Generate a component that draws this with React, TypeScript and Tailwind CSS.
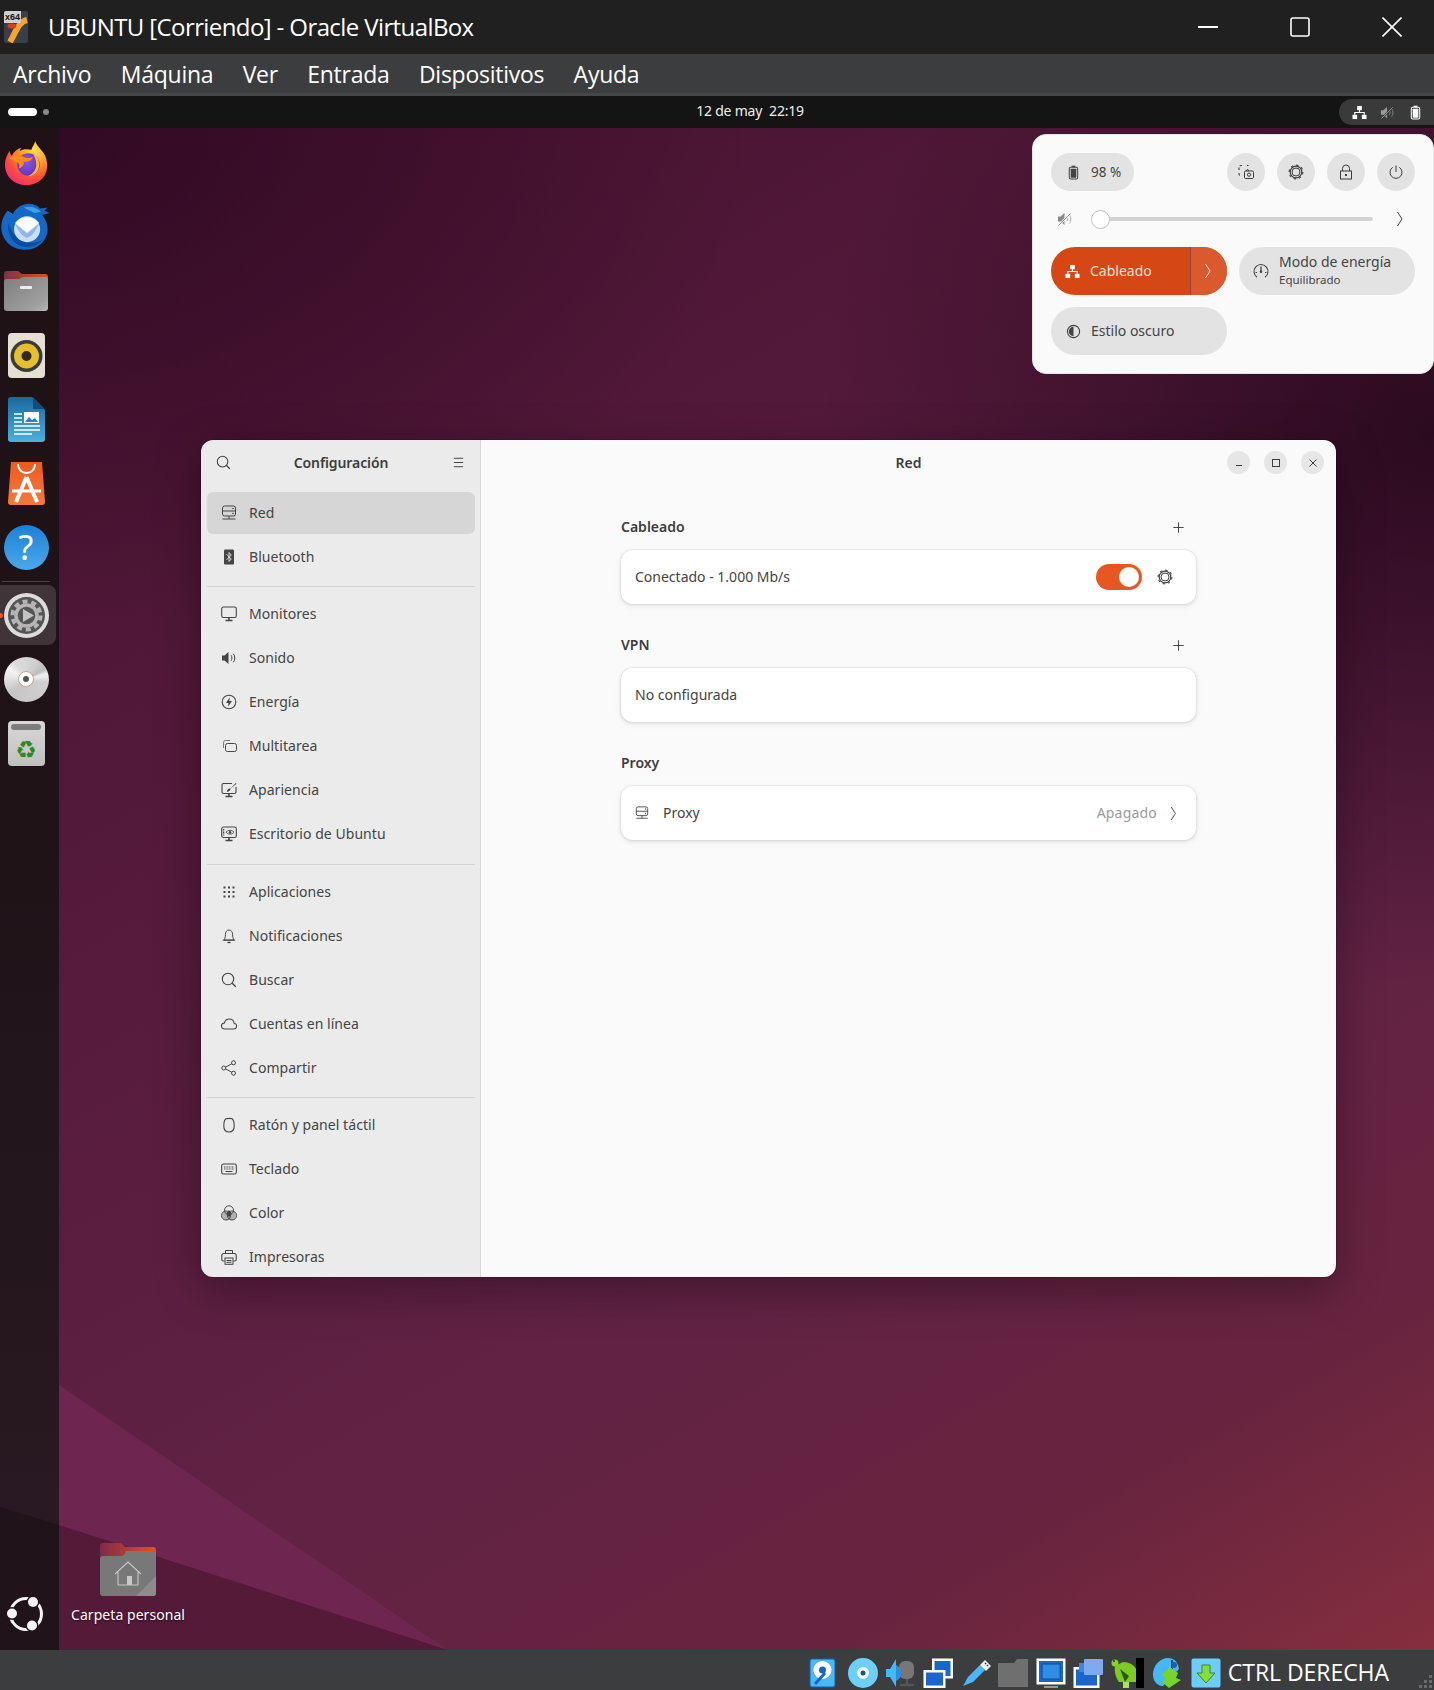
import React from "react";

type P = { className?: string };
const base = "w-4 h-4 shrink-0";
const S = ({ className, children }: P & { children: React.ReactNode }) => (
  <svg viewBox="0 0 16 16" fill="none" stroke="currentColor" strokeWidth={1} className={className ?? base}>
    {children}
  </svg>
);

const NetServer = (p: P) => (
  <S {...p}>
    <rect x="1.5" y="1" width="13" height="10" rx="2" />
    <path d="M1.5 6h13M1.5 14h13M8 11v3" />
    <circle cx="12" cy="3.5" r=".8" fill="currentColor" stroke="none" />
    <circle cx="12" cy="8.5" r=".8" fill="currentColor" stroke="none" />
  </S>
);
const Bluetooth = (p: P) => (
  <S {...p}>
    <rect x="3" y="0.5" width="10" height="15" rx="1.2" fill="currentColor" stroke="none" />
    <path d="M5.5 5.2 10.3 10 8 12.5V3.5L10.3 6 5.5 10.8" stroke="#ebebeb" strokeWidth=".9" />
  </S>
);
const Monitor = (p: P) => (
  <S {...p}>
    <rect x="0.7" y="1" width="14.6" height="10.5" rx="1.8" strokeWidth="1.1" />
    <path d="M8 11.5v2.5M4.5 14.5h7" strokeWidth="1.6" />
  </S>
);
const Sound = (p: P) => (
  <S {...p}>
    <path d="M1 5.5h2.5L7.5 2v12L3.5 10.5H1z" fill="currentColor" stroke="none" />
    <path d="M10 5.2c1.2 1.6 1.2 4 0 5.6M12.3 3.7c2 2.4 2 6.2 0 8.6" />
  </S>
);
const Power = (p: P) => (
  <S {...p}>
    <circle cx="8" cy="8" r="6.8" strokeWidth="1.1" />
    <path d="M8.8 3.2 5 9h2.5l-.5 3.8L11 7H8.3z" fill="currentColor" stroke="none" />
  </S>
);
const Multi = (p: P) => (
  <S {...p}>
    <rect x="4.5" y="5.5" width="11" height="8" rx="2" />
    <path d="M2.5 10V4.5a2 2 0 0 1 2-2H9" stroke="#777" />
  </S>
);
const Appear = (p: P) => (
  <S {...p}>
    <path d="M11 1.5H2.5a1.5 1.5 0 0 0-1.5 1.5v7A1.5 1.5 0 0 0 2.5 11.5h11A1.5 1.5 0 0 0 15 10V5" strokeWidth="1.1" />
    <path d="M8 11.5v2.5M4.5 14.5h7" strokeWidth="1.6" />
    <path d="M14.8 1 9.5 6.5c-2-.5-3.3.8-3.7 3.3 2.4-.1 3.9-1.4 3.6-3L15.5 1.7z" fill="currentColor" stroke="none" />
  </S>
);
const UbuDesk = (p: P) => (
  <S {...p}>
    <rect x="0.7" y="1" width="14.6" height="10.5" rx="1.8" strokeWidth="1.1" />
    <path d="M8 11.5v2.5M4.5 14.5h7" strokeWidth="1.6" />
    <path d="M2.6 3v6.5" strokeWidth="1.4" strokeDasharray="1 .5" />
    <path d="M5 6.2c2-2.5 6-2.5 8 0-2 2.5-6 2.5-8 0z" strokeWidth=".9" />
    <circle cx="9" cy="6.2" r="1.2" fill="currentColor" stroke="none" />
  </S>
);
const Apps = (p: P) => (
  <S {...p}>
    {[3.5, 8, 12.5].flatMap((x) =>
      [3.5, 8, 12.5].map((y) => <rect key={x + "-" + y} x={x - 1} y={y - 1} width="2" height="2" fill="currentColor" stroke="none" />)
    )}
  </S>
);
const Bell = (p: P) => (
  <S {...p}>
    <path d="M3 12c1-1.5 1.4-3 1.4-5.5 0-2.5 1.4-4.5 3.6-4.5s3.6 2 3.6 4.5c0 2.5.4 4 1.4 5.5z" />
    <path d="M1.8 12.2h12.4" />
    <path d="M6.5 14.5h3" strokeWidth="1.4" />
  </S>
);
const Search = (p: P) => (
  <S {...p}>
    <circle cx="7" cy="7" r="5.7" strokeWidth="1.1" />
    <path d="m11.2 11.2 3.6 3.6" strokeWidth="1.3" />
  </S>
);
const Cloud = (p: P) => (
  <S {...p} >
    <path d="M4 13C1.8 13 .5 11.7.5 10c0-1.6 1.2-2.9 2.9-3C4 4.600 6 3 8.300 3c2.700 0 4.500 1.900 4.800 4.200 1.500.2 2.500 1.400 2.500 2.900C15.600 11.700 14.300 13 12.500 13z" strokeWidth="1.050" />
  </S>
);
const Share = (p: P) => (
  <S {...p}>
    <circle cx="12.500" cy="2.800" r="2" />
    <circle cx="12.500" cy="13.200" r="2" />
    <circle cx="2.800" cy="8" r="2" />
    <path d="M4.600 7.100 10.700 3.800M4.600 8.900l6.100 3.300" />
  </S>
);
const Mouse = (p: P) => (
  <S {...p}>
    <path d="M4.800 1.800C3.300 3 2.800 5.500 2.800 9c0 3.500 1.800 6 5.200 6s5.200-2.500 5.200-6c0-3.500-.5-6-2-7.200-.8-.6-4.600-.6-5.400 0z" strokeWidth="1.100" />
  </S>
);
const Keyboard = (p: P) => (
  <S {...p}>
    <rect x="0.700" y="3" width="14.600" height="10" rx="1.800" strokeWidth="1.100" />
    <path d="M3 6h10M3 8h10" strokeWidth="1.100" strokeDasharray="1 .6" />
    <path d="M4.500 10.500h7" strokeWidth="1.200" />
  </S>
);
const ColorI = (p: P) => (
  <S {...p}>
    <circle cx="8" cy="5.300" r="4.500" />
    <circle cx="5" cy="10.500" r="4.500" />
    <circle cx="11" cy="10.500" r="4.500" />
    <path d="M8 5 5.500 8 6.500 11.500 9.500 11.500 10.500 8z" fill="currentColor" stroke="none" />
    <path d="M2.500 7 1 10.500 2 13l2 2h8l2-2 1-2.500L13.500 7l-2 .5L8 7 4.500 7.500z" fill="currentColor" fillOpacity=".35" stroke="none" />
  </S>
);
const Printer = (p: P) => (
  <S {...p}>
    <path d="M4.500 4.500V1.500h7v3" />
    <path d="M3.500 12H2.200A1.400 1.400 0 0 1 .800 10.600V6.500a2 2 0 0 1 2-2h10.400a2 2 0 0 1 2 2v4.100A1.400 1.400 0 0 1 13.800 12h-1.300" strokeWidth="1.100" />
    <rect x="4" y="9" width="8" height="6.300" />
    <path d="M5.500 11.500h5M5.500 13.300h5" />
  </S>
);
const Menu = (p: P) => (
  <S {...p}>
    <path d="M3 3.500h10M3 8h10M3 12.500h10" />
  </S>
);
const Plus = (p: P) => (
  <S {...p}>
    <path d="M8 2.500v11M2.500 8h11" />
  </S>
);
const Chevron = (p: P) => (
  <S {...p}>
    <path d="M5.500 1 10 8l-4.500 7" />
  </S>
);
const Gear = (p: P) => (
  <S {...p}>
    <circle cx="8" cy="8" r="4" />
    <circle cx="8" cy="8" r="5.800" strokeWidth="1.200" />
    <circle cx="8" cy="8" r="6.900" strokeWidth="1.100" strokeDasharray="2.400 3" />
  </S>
);
const Battery = (p: P) => (
  <S {...p}>
    <path d="M6 1.500h4" strokeWidth="1.500" />
    <rect x="3.500" y="2.500" width="9" height="12.500" rx="1.600" strokeWidth="1.100" />
    <rect x="5" y="4" width="6" height="9.500" rx=".4" fill="currentColor" stroke="none" />
  </S>
);
const Wired = (p: P) => (
  <S {...p}>
    <g fill="currentColor" stroke="none">
      <rect x="5.500" y="1" width="5" height="4.500" />
      <rect x="0.500" y="10.500" width="5" height="4.500" />
      <rect x="10.500" y="10.500" width="5" height="4.500" />
    </g>
    <path d="M8 5v3M3 10.500V8h10v2.500" strokeWidth="1.300" />
  </S>
);
const Muted = (p: P) => (
  <S {...p}>
    <path d="M1 5.500h2.500L7.500 2v12L3.500 10.500H1z" fill="currentColor" stroke="none" />
    <path d="M10 5.500c1 1.500 1 3.500 0 5M12.300 3.700c2 2.400 2 6.200 0 8.600" strokeOpacity=".75" />
    <path d="M1 15 14 2" stroke="#fafafa" strokeWidth="2" />
    <path d="M1.500 14.500 13.500 2.500" />
  </S>
);
const MutedDark = (p: P) => (
  <S {...p}>
    <path d="M1 5.500h2.500L7.500 2v12L3.500 10.500H1z" fill="currentColor" stroke="none" />
    <path d="M10 5.500c1 1.500 1 3.500 0 5M12.300 3.700c2 2.400 2 6.200 0 8.600" strokeOpacity=".75" />
    <path d="M1 15 14 2" stroke="#3a3a3a" strokeWidth="2" />
    <path d="M1.500 14.500 13.500 2.500" />
  </S>
);
const Screenshot = (p: P) => (
  <S {...p}>
    <path d="M1 6V3.500A2 2 0 0 1 3 1.500h1M9 1.500h1.500M1 9v1a2 2 0 0 0 2 2" strokeWidth="1.100" strokeDasharray="2.500 1.500" />
    <rect x="6.500" y="7" width="9" height="7.500" rx="1.200" />
    <path d="M8 7l.8-1.200h1.400L11 7" />
    <circle cx="11" cy="10.700" r="1.600" />
  </S>
);
const Lock = (p: P) => (
  <S {...p}>
    <rect x="2.500" y="7" width="11" height="8" />
    <path d="M4.500 7V4.500a3.500 3.500 0 0 1 7 0V7" />
    <rect x="7" y="10" width="2" height="2" fill="currentColor" stroke="none" />
  </S>
);
const PowerOff = (p: P) => (
  <S {...p}>
    <path d="M8 1.500v6.500" />
    <path d="M4.700 3.300a6 6 0 1 0 6.600 0" />
  </S>
);
const Gauge = (p: P) => (
  <S {...p}>
    <path d="M4 14.200a7 7 0 1 1 8 0" strokeWidth="1.100" />
    <path d="M8 3.500V8" strokeWidth="1.300" />
    <circle cx="8" cy="8.800" r="1.300" fill="currentColor" stroke="none" />
    <path d="M2.500 9.500h1.500M12 9.500h1.500" />
  </S>
);
const Contrast = (p: P) => (
  <S {...p}>
    <circle cx="8" cy="8" r="6.500" strokeWidth="1.200" />
    <path d="M8 3a5 5 0 0 0 0 10z" fill="currentColor" stroke="none" />
  </S>
);

/* Dock artwork */
const Firefox = () => (
  <svg viewBox="0 0 48 48" className="w-[47px] h-[47px]">
    <defs>
      <radialGradient id="ff1" cx="0.7" cy="0.2" r="0.95">
        <stop offset="0" stopColor="#ffe34d" />
        <stop offset="0.35" stopColor="#ff9a2a" />
        <stop offset="0.7" stopColor="#ff4a3c" />
        <stop offset="1" stopColor="#e8288a" />
      </radialGradient>
      <radialGradient id="ff2" cx="0.4" cy="0.35" r="0.8">
        <stop offset="0" stopColor="#8a5ae0" />
        <stop offset="1" stopColor="#5a2bb0" />
      </radialGradient>
    </defs>
    <path d="M33 1c1 5 7 9 10 15 3 7 3 15-1 21-4 6-11 9-18 9C11 46 2 37 2 25c0-5 2-10 5-14 0 3 1 4 2 5 2-4 6-7 10-8-2 2-2 3-2 3 3-2 8-2 12-1 1-3 3-6 4-9z" fill="url(#ff1)" />
    <circle cx="26" cy="25" r="11.500" fill="url(#ff2)" />
    <path d="M6 19c5-4 11-4 17-1 3 1 6 0 8-1-2 4-6 6-10 5 1 3-1 6-5 7 2-3 0-6-3-7-3-1-5-2-7-3z" fill="#ff8a1e" />
    <path d="M30 13c4 2 7 6 7 12 0 7-5 12-12 12 5-2 9-6 9-12 0-5-2-9-4-12z" fill="#ffb42a" />
  </svg>
);
const Thunderbird = () => (
  <svg viewBox="0 0 48 48" className="w-[52px] h-[52px] shrink-0">
    <path d="M7 9C2 15 0 22 2 30c3 10 12 15 21 15 11 0 20-7 21-18 0-6-2-10-5-14l7-2-5-2 3-3-7 1C33 2 25 1 18 5c-3 2-5 4-6 7-1-1-3-2-5-3z" fill="#1568c4" />
    <path d="M8 20c-2 8 2 17 10 21 7 3 16 1 21-5-6 3-14 4-20 0-6-4-10-9-11-16z" fill="#0a4ca0" />
    <path d="M22 6c6-2 12 0 16 4l-6 1c-4-2-7-3-10-5z" fill="#3fa0ea" />
    <circle cx="25" cy="26" r="12" fill="#c9dff5" />
    <path d="M14 20c3-3 7-5 11-5s8 2 11 5l-11 9z" fill="#ffffff" />
    <path d="M14 21c3 7 7 12 11 13 4-1 8-6 11-13l-11 9z" fill="#8fb8e6" />
  </svg>
);
const FilesIcon = () => (
  <svg viewBox="0 0 46 42" className="w-[46px] h-[42px]">
    <defs>
      <linearGradient id="fo1" x1="0" x2="1">
        <stop offset="0" stopColor="#7d2f4a" />
        <stop offset="1" stopColor="#e0501f" />
      </linearGradient>
      <linearGradient id="fo2" x1="0" y1="0" x2="1" y2="1">
        <stop offset="0" stopColor="#7e7e7e" />
        <stop offset="0.8" stopColor="#a0a0a0" />
        <stop offset="1" stopColor="#b8b8b8" />
      </linearGradient>
    </defs>
    <path d="M1 4a3 3 0 0 1 3-3h11l4 3h23a3 3 0 0 1 3 3v10H1z" fill="url(#fo1)" />
    <path d="M1 12a3 3 0 0 1 3-3h12l4-2h22a3 3 0 0 1 3 3v28a3 3 0 0 1-3 3H4a3 3 0 0 1-3-3z" fill="url(#fo2)" />
    <rect x="17" y="16" width="12" height="3" rx="1" fill="#eee" />
  </svg>
);
const Rhythmbox = () => (
  <svg viewBox="0 0 37 45" className="w-[37px] h-[45px]">
    <rect width="37" height="45" rx="4" fill="#e6e0d2" />
    <circle cx="18.500" cy="23" r="16" fill="#3a3a3a" />
    <circle cx="18.500" cy="23" r="12.500" fill="#e8bf2a" />
    <circle cx="18.500" cy="23" r="5" fill="#2e2a20" />
  </svg>
);
const Writer = () => (
  <svg viewBox="0 0 37 45" className="w-[37px] h-[45px]">
    <defs>
      <linearGradient id="wr" x1="0" y1="0" x2="0" y2="1">
        <stop offset="0" stopColor="#17699e" />
        <stop offset="1" stopColor="#4db0dc" />
      </linearGradient>
    </defs>
    <path d="M3 0h21l13 13v29a3 3 0 0 1-3 3H3a3 3 0 0 1-3-3V3a3 3 0 0 1 3-3z" fill="url(#wr)" />
    <path d="M25 0l12 12H25z" fill="#0e4e78" />
    <path d="M6 17h8M6 21h8M6 25h8M6 29h26M6 33h26M6 37h18" stroke="#fff" strokeWidth="1.600" />
    <rect x="16" y="15" width="15" height="11" fill="#fff" />
    <path d="M17 25l4-5 3 3 3-2 3 4z" fill="#2a86b8" />
  </svg>
);
const AppCenter = () => (
  <svg viewBox="0 0 37 43" className="w-[37px] h-[43px]">
    <defs>
      <linearGradient id="ac" x1="0" y1="0" x2="0" y2="1">
        <stop offset="0" stopColor="#f05a22" />
        <stop offset="1" stopColor="#f47a3a" />
      </linearGradient>
    </defs>
    <path d="M3 0h31l3 40a3 3 0 0 1-3 3H3a3 3 0 0 1-3-3z" fill="url(#ac)" />
    <path d="M10 2c0 12 17 12 17 0" fill="none" stroke="#fff" strokeWidth="1.800" />
    <path d="M18.500 15 8 40M18.500 15 29 40" stroke="#fff" strokeWidth="4" />
    <path d="M4 29h29" stroke="#fff" strokeWidth="3" />
  </svg>
);
const Help = () => (
  <div className="w-[45px] h-[45px] rounded-full bg-gradient-to-b from-[#1b80d8] to-[#4aa9e8] flex items-center justify-center text-white text-[34px] leading-none font-['Noto_Sans',sans-serif]">?</div>
);
const SettingsIcon = () => (
  <svg viewBox="0 0 45 45" className="w-[45px] h-[45px]">
    <circle cx="22.500" cy="22.500" r="22.500" fill="#dcdcdc" />
    <circle cx="22.500" cy="22.500" r="18.500" fill="#555" />
    <circle cx="22.500" cy="22.500" r="14" fill="none" stroke="#b5b5b5" strokeWidth="4" strokeDasharray="5 3.800" />
    <circle cx="22.500" cy="22.500" r="10.500" fill="none" stroke="#b5b5b5" strokeWidth="3.500" />
    <path d="M19 16l11 6.500L19 29z" fill="#c4c4c4" />
  </svg>
);
const Disc = () => (
  <div className="w-[45px] h-[45px] rounded-full bg-[conic-gradient(from_300deg,#f4f4f4_0deg,#dcdcdc_25deg,#cfcfcf_90deg,#bdbdbd_120deg,#f2f2f2_135deg,#d0d0d0_160deg,#c6c6c6_290deg,#f4f4f4_360deg)] flex items-center justify-center">
    <div className="w-[16px] h-[16px] rounded-full bg-white border border-[#b8a890] flex items-center justify-center">
      <div className="w-[6px] h-[6px] rounded-full bg-[#555]" />
    </div>
  </div>
);
const Trash = () => (
  <div className="w-[37px] h-[45px] rounded-[4px] bg-gradient-to-b from-[#d8d8d8] to-[#c0c0c0] flex flex-col items-center pt-[3px]">
    <div className="w-[30px] h-[6px] rounded-[3px] bg-[#7d7d7d]" />
    <span className="text-[#2d8a1e] text-[24px] leading-none mt-[8px] font-['DejaVu_Sans',sans-serif]">♻</span>
  </div>
);
const UbuntuLogo = () => (
  <svg viewBox="0 0 40 40" className="w-[40px] h-[40px]">
    <circle cx="20" cy="20" r="15.500" fill="none" stroke="#f4f4f4" strokeWidth="3" />
    <circle cx="27" cy="8" r="6.500" fill="#20141a" />
    <circle cx="6" cy="19.500" r="6.500" fill="#20141a" />
    <circle cx="26" cy="31.500" r="6.500" fill="#20141a" />
    <circle cx="27" cy="8" r="5" fill="#f4f4f4" />
    <circle cx="6" cy="19.500" r="5" fill="#f4f4f4" />
    <circle cx="26" cy="31.500" r="5" fill="#f4f4f4" />
  </svg>
);

const HomeFolder = () => (
  <svg viewBox="0 0 56 53" className="w-[56px] h-[53px]">
    <defs>
      <linearGradient id="hf" x1="0" x2="1">
        <stop offset="0" stopColor="#7f2b4c" />
        <stop offset="1" stopColor="#e6501c" />
      </linearGradient>
    </defs>
    <path d="M0 3a3 3 0 0 1 3-3h18l4 4h28a3 3 0 0 1 3 3v14H0z" fill="url(#hf)" />
    <path d="M0 16a3 3 0 0 1 3-3h19l3-2 1-3h27a3 3 0 0 1 3 3v39a3 3 0 0 1-3 3H3a3 3 0 0 1-3-3z" fill="#787878" />
    <path d="M36 53l20-20v17a3 3 0 0 1-3 3z" fill="#8c8c8c" />
    <path d="M15 31 28 19l13 12M18 29v13M38 29v13M18 42h20" fill="none" stroke="#c8c8c8" strokeWidth="1.100" />
    <rect x="27" y="33" width="5" height="9" fill="#c8c8c8" />
  </svg>
);

/* VirtualBox status icons */
const sb = "w-[30px] h-[30px] shrink-0";
const VbHdd = () => (
  <svg viewBox="0 0 30 30" className="w-[30px] h-[30px] shrink-0 mr-[3.5px]">
    <rect x="3" y="1" width="25" height="28" rx="2" fill="#4ab8f5" stroke="#0a5fc0" />
    <circle cx="15.500" cy="12" r="9" fill="#fff" />
    <circle cx="15.500" cy="12" r="3.500" fill="#1466c8" />
    <path d="M8 26 18 15" stroke="#1466c8" strokeWidth="3" />
  </svg>
);
const VbDisc = () => (
  <svg viewBox="0 0 30 30" className={sb}>
    <circle cx="15" cy="15" r="15" fill="#6cd0fb" />
    <circle cx="15" cy="15" r="6" fill="#f0fbff" />
    <circle cx="15" cy="15" r="2.500" fill="#14569c" />
  </svg>
);
const VbAudio = () => (
  <svg viewBox="0 0 30 30" className={sb}>
    <rect x="13" y="3" width="15" height="18" rx="6" fill="#777" />
    <path d="M14 27h14M21 21v6" stroke="#555" strokeWidth="2.500" />
    <path d="M0 11h4l6-10v28l-6-10H0z" fill="#45b8f5" />
    <path d="M10 7c7 3 7 13 0 16z" fill="#2a8ee0" />
  </svg>
);
const VbNet = () => (
  <svg viewBox="0 0 30 30" className={sb}>
    <rect x="9" y="0.500" width="21" height="20" fill="#fff" />
    <rect x="11.500" y="3" width="16" height="15" fill="#1a66cc" />
    <rect x="0.500" y="12" width="22" height="18" fill="#fff" />
    <rect x="3" y="14.500" width="17" height="13" fill="#1a66cc" />
  </svg>
);
const VbUsb = () => (
  <svg viewBox="0 0 30 30" className={sb}>
    <path d="M2 28l5-9L19 7l5 5-12 12z" fill="#4ab8f5" />
    <path d="M19 7l5-5 6 6-5 5z" fill="#f0f0f0" />
    <path d="M24 5l1 1M27 8l-1-1" stroke="#333" strokeWidth="1.500" />
  </svg>
);
const VbFolder = () => (
  <svg viewBox="0 0 30 30" className={sb}>
    <path d="M0 5h16l3-4h11v28H0z" fill="#6f6f6f" />
  </svg>
);
const VbDisplay = () => (
  <svg viewBox="0 0 30 30" className={sb}>
    <rect x="0.500" y="0.500" width="29" height="26" fill="#fff" />
    <rect x="3" y="3" width="24" height="21" fill="#1a66cc" />
    <rect x="6" y="6" width="18" height="15" fill="#2f8de4" stroke="#0e4ca0" />
    <path d="M8 29h14" stroke="#999" strokeWidth="2" />
  </svg>
);
const VbCapture = () => (
  <svg viewBox="0 0 30 30" className={sb}>
    <rect x="0.500" y="9" width="26" height="21" fill="#fff" />
    <rect x="3" y="11.500" width="21" height="16" fill="#1a66cc" />
    <rect x="11" y="1" width="19" height="16" rx="1" fill="#7eaaf0" />
    <path d="M6 5h5v9H6z" fill="#3f86e4" />
  </svg>
);
const VbTurtle = () => (
  <div className="w-[33px] h-[30px] shrink-0 flex">
    <svg viewBox="0 0 25 30" className="w-[25px] h-[30px]">
      <circle cx="4" cy="5" r="3.500" fill="#86d62a" />
      <circle cx="3" cy="3" r="1" fill="#1a3a08" />
      <path d="M4 8l8-4c6 0 11 3 13 7v13H8C5 20 3 14 4 8z" fill="#7ecb22" />
      <path d="M9 11l9 7-4 6z" fill="#2a5a10" />
      <path d="M12 24h6v6h-6z" fill="#a6e64a" />
    </svg>
    <div className="w-[8px] h-[30px] bg-black" />
  </div>
);
const VbCpu = () => (
  <svg viewBox="0 0 32 30" className="w-[32px] h-[30px] shrink-0">
    <path d="M3 22C-1 12 7 0 17 0c7 0 10 5 11 11L12 28C8 28 5 26 3 22z" fill="#45b8f5" />
    <path d="M21 2v10" stroke="#0e4ca0" strokeWidth="2" />
    <circle cx="23" cy="7" r="3" fill="#1c5ca8" />
    <path d="M10 17 19 9l8 6-2 5 5 2-12 8-7-6 4-4z" fill="#76d42c" />
  </svg>
);
const VbDown = () => (
  <svg viewBox="0 0 30 30" className={sb}>
    <rect x="0.500" y="0.500" width="29" height="29" rx="2" fill="#6dcdfa" />
    <path d="M11 7h8v8h5L15 25 6 15h5z" fill="#86dc3a" stroke="#3a8a1a" />
  </svg>
);

const uif = "font-['Noto_Sans',sans-serif]";

type Row = { label: string; Icon: (p: P) => React.ReactElement; active?: boolean };
const groups: Row[][] = [
  [
    { label: "Red", Icon: NetServer, active: true },
    { label: "Bluetooth", Icon: Bluetooth },
  ],
  [
    { label: "Monitores", Icon: Monitor },
    { label: "Sonido", Icon: Sound },
    { label: "Energía", Icon: Power },
    { label: "Multitarea", Icon: Multi },
    { label: "Apariencia", Icon: Appear },
    { label: "Escritorio de Ubuntu", Icon: UbuDesk },
  ],
  [
    { label: "Aplicaciones", Icon: Apps },
    { label: "Notificaciones", Icon: Bell },
    { label: "Buscar", Icon: Search },
    { label: "Cuentas en línea", Icon: Cloud },
    { label: "Compartir", Icon: Share },
  ],
  [
    { label: "Ratón y panel táctil", Icon: Mouse },
    { label: "Teclado", Icon: Keyboard },
    { label: "Color", Icon: ColorI },
    { label: "Impresoras", Icon: Printer },
  ],
];

const Sidebar = () => (
  <aside className="w-[280px] shrink-0 bg-[#ebebeb] border-r border-[#d8d8d8] flex flex-col overflow-hidden">
    <div className="h-[44px] shrink-0 flex items-center justify-between pl-[15px] pr-[14px] mb-[8px] text-[#3d3d3d]">
      <Search className="w-[15px] h-[15px]" />
      <span className="text-[14px] font-semibold tracking-[-0.1px]">Configuración</span>
      <Menu className="w-[15px] h-[15px]" />
    </div>
    <div className="flex flex-col pl-[6px] pr-[5px]">
      {groups.map((g, i) => (
        <div key={i} className="flex flex-col">
          {i > 0 && <div className={i === 2 ? "h-px bg-[#d3d3d3] mt-[7px] mb-[6px] shrink-0" : "h-px bg-[#d3d3d3] my-[6px] shrink-0"} />}
          {g.map((r) => (
            <div
              key={r.label}
              className={
                r.active
                  ? "h-[42px] mb-[2px] shrink-0 flex items-center gap-[12px] pl-[14px] rounded-[6px] bg-[#d6d6d6] text-[#444444]"
                  : "h-[42px] mb-[2px] shrink-0 flex items-center gap-[12px] pl-[14px] rounded-[6px] text-[#444444]"
              }
            >
              <r.Icon />
              <span className="text-[14px] tracking-[0.05px] -mt-[2px]">{r.label}</span>
            </div>
          ))}
        </div>
      ))}
    </div>
  </aside>
);

const Card = ({ children }: { children: React.ReactNode }) => (
  <div className="h-[54px] mt-[9px] bg-white rounded-[12px] flex items-center px-[14px] text-[14px] text-[#444444] shadow-[0_0_0_1px_rgba(0,0,0,0.03),0_1px_3px_1px_rgba(0,0,0,0.07),0_2px_6px_2px_rgba(0,0,0,0.03)]">
    {children}
  </div>
);

const Heading = ({ title, plus }: { title: string; plus?: boolean }) => (
  <div className="h-[28px] flex items-center justify-between text-[#3d3d3d] pr-[10px]">
    <span className="text-[14px] font-semibold -mt-[2px]">{title}</span>
    {plus && <Plus className="w-[15px] h-[15px]" />}
  </div>
);

const WinBtn = ({ children }: { children: React.ReactNode }) => (
  <div className="w-[23px] h-[23px] rounded-full bg-[#e6e6e6] flex items-center justify-center text-[#3d3d3d]">{children}</div>
);

const Content = () => (
  <main className="flex-1 bg-[#fafafa] flex flex-col min-w-0">
    <div className="h-[44px] shrink-0 relative flex items-center justify-center text-[#3d3d3d]">
      <span className="text-[14px] font-semibold">Red</span>
      <div className="absolute right-[12px] top-[11px] flex gap-[14px]">
        <WinBtn>
          <svg viewBox="0 0 12 12" className="w-[12px] h-[12px]" stroke="currentColor" fill="none">
            <path d="M3 8.500h6" />
          </svg>
        </WinBtn>
        <WinBtn>
          <svg viewBox="0 0 12 12" className="w-[12px] h-[12px]" stroke="currentColor" fill="none">
            <rect x="2.500" y="2.500" width="7" height="7" />
          </svg>
        </WinBtn>
        <WinBtn>
          <svg viewBox="0 0 12 12" className="w-[12px] h-[12px]" stroke="currentColor" fill="none">
            <path d="M2.500 2.500l7 7M9.500 2.500l-7 7" />
          </svg>
        </WinBtn>
      </div>
    </div>
    <div className="w-[575px] ml-[140px] pt-[29px] flex flex-col">
      <Heading title="Cableado" plus />
      <Card>
        <span className="flex-1 -mt-[2px]">Conectado - 1.000 Mb/s</span>
        <div className="w-[46px] h-[26px] rounded-full bg-[#ea5622] flex items-center justify-end pr-[3px]">
          <div className="w-[20px] h-[20px] rounded-full bg-white" />
        </div>
        <Gear className="w-[16px] h-[16px] ml-[15px] mr-[9px]" />
      </Card>
      <div className="h-[27px]" />
      <Heading title="VPN" plus />
      <Card><span className="-mt-[2px]">No configurada</span></Card>
      <div className="h-[27px]" />
      <Heading title="Proxy" />
      <Card>
        <NetServer className="w-[14px] h-[14px] mr-[14px]" />
        <span className="flex-1 -mt-[2px]">Proxy</span>
        <span className="text-[#9a9a9a] tracking-[0.2px] -mt-[2px]">Apagado</span>
        <Chevron className="w-[15px] h-[15px] ml-[9px] mr-[1px]" />
      </Card>
    </div>
  </main>
);

const QsCircle = ({ children }: { children: React.ReactNode }) => (
  <div className="w-[38px] h-[38px] rounded-full bg-[#e3e3e3] flex items-center justify-center text-[#3d3d3d]">{children}</div>
);

const QuickSettings = () => (
  <div className="absolute left-[973px] top-[6px] w-[402px] h-[240px] rounded-[14px] bg-[#fafafa] border border-[#e5e5e5] pt-[18px] px-[18px] text-[#444444] text-[14px]">
    <div className="flex items-center justify-between">
      <div className="h-[38px] w-[83px] rounded-full bg-[#e3e3e3] flex items-center pl-[15px] gap-[10px]">
        <Battery className="w-[15px] h-[15px]" />
        <span className="text-[13.500px]">98 %</span>
      </div>
      <div className="flex gap-[12px]">
        <QsCircle><Screenshot /></QsCircle>
        <QsCircle><Gear /></QsCircle>
        <QsCircle><Lock /></QsCircle>
        <QsCircle><PowerOff /></QsCircle>
      </div>
    </div>
    <div className="h-[32px] mt-[12px] flex items-center">
      <Muted className="w-[16px] h-[16px] ml-[6px] text-[#8a8a8a]" />
      <div className="relative ml-[18px] w-[282px] h-[18px] flex items-center">
        <div className="ml-[9px] flex-1 h-[4px] rounded-full bg-[#d2d2d2]" />
        <div className="absolute left-0 top-0 w-[19px] h-[19px] rounded-full bg-white border border-[#c0c0c0]" />
      </div>
      <Chevron className="w-[16px] h-[16px] ml-[19px]" />
    </div>
    <div className="grid grid-cols-2 gap-[12px] mt-[12px]">
      <div className="h-[48px] rounded-full bg-[#d54816] text-white flex items-stretch overflow-hidden">
        <div className="flex-1 flex items-center pl-[14px] gap-[10px]">
          <Wired className="w-[15px] h-[15px]" />
          <span className="text-[#f3e3dc] -mt-[2px]">Cableado</span>
        </div>
        <div className="w-[37px] bg-[#da5a2e] border-l border-[#8e4a30] flex items-center justify-center pr-[2px]">
          <Chevron className="w-[16px] h-[16px] text-[#f8e0d5]" />
        </div>
      </div>
      <div className="h-[48px] rounded-full bg-[#e3e3e3] flex items-center pl-[14px] gap-[10px]">
        <Gauge className="w-[16px] h-[16px]" />
        <div className="flex flex-col leading-none -mt-[3px]">
          <span className="leading-[20px]">Modo de energía</span>
          <span className="text-[11.500px] leading-[15px]">Equilibrado</span>
        </div>
      </div>
      <div className="h-[48px] rounded-full bg-[#e3e3e3] flex items-center pl-[15px] gap-[10px]">
        <Contrast className="w-[15px] h-[15px]" />
        <span className="-mt-[2px]">Estilo oscuro</span>
      </div>
    </div>
  </div>
);

const DockSlot = ({ children }: { children: React.ReactNode }) => (
  <div className="h-[64px] shrink-0 flex items-center justify-center w-[52px]">{children}</div>
);

const Dock = () => (
  <nav className="relative w-[59px] shrink-0 bg-gradient-to-b from-[#1e1217] via-[#1f1318] to-[#2b1a24] flex flex-col pt-[3px] overflow-hidden">
    <DockSlot><Firefox /></DockSlot>
    <DockSlot><Thunderbird /></DockSlot>
    <DockSlot><FilesIcon /></DockSlot>
    <DockSlot><Rhythmbox /></DockSlot>
    <DockSlot><Writer /></DockSlot>
    <DockSlot><AppCenter /></DockSlot>
    <DockSlot><Help /></DockSlot>
    <div className="h-[6px] shrink-0 pt-[2px] pl-[2px]">
      <div className="w-[48px] h-px bg-[#4a4046]" />
    </div>
    <div className="relative h-[60px] w-[56px] shrink-0 rounded-r-[8px] bg-[#3f3438] flex items-center justify-center pr-[4px]">
      <SettingsIcon />
      <div className="absolute left-0 top-[28px] w-[3px] h-[5px] rounded-r-full bg-[#e95420]" />
    </div>
    <div className="h-[2px] shrink-0" />
    <DockSlot><Disc /></DockSlot>
    <DockSlot><Trash /></DockSlot>
    <div className="mt-auto mb-[16px] w-[52px] flex justify-center relative z-10">
      <UbuntuLogo />
    </div>
    <svg viewBox="0 0 59 145" className="absolute left-0 bottom-0 w-[59px] h-[145px]">
      <path d="M0 2 59 20V145H0z" fill="#20141a" />
    </svg>
  </nav>
);

const Wallpaper = () => (
  <svg className="absolute inset-0 w-full h-full" viewBox="0 0 1375 1522" preserveAspectRatio="none">
    <path d="M0 1257 389 1522 0 1522z" fill="#6e2650" />
    <path d="M0 1397 389 1522H0z" fill="#541a38" />
  </svg>
);

export default function App() {
  return (
    <div className={`w-[1434px] h-[1690px] flex flex-col overflow-hidden ${uif}`}>
      <header className="h-[54px] shrink-0 bg-[#202020] flex items-center font-['Open_Sans',sans-serif] text-white">
        <div className="relative w-[24px] h-[32px] ml-[4px] bg-[#3a3f48] rounded-[2px] overflow-hidden">
          <svg viewBox="0 0 24 32" className="w-[24px] h-[32px]" fill="none">
            <path d="M23 9C14 11 12 21 6 31" stroke="#f6a42a" strokeWidth="6" />
            <ellipse cx="8" cy="15" rx="4.500" ry="2.500" fill="#d8401c" />
          </svg>
          <span className="absolute left-0 top-0 w-[17px] h-[12px] bg-[#d0d0d0] text-[#111] text-[9px] leading-[12px] font-bold text-center font-['Liberation_Sans',sans-serif]">x64</span>
        </div>
        <span className="ml-[20px] text-[24px] tracking-[-0.6px] flex-1 -mt-[1px]">UBUNTU [Corriendo] - Oracle VirtualBox</span>
        <div className="flex items-center gap-[72px] pr-[32px]">
          <svg viewBox="0 0 20 20" className="w-[20px] h-[20px]" stroke="#fff" strokeWidth="2" fill="none">
            <path d="M0 10h20" />
          </svg>
          <svg viewBox="0 0 20 20" className="w-[20px] h-[20px]" stroke="#fff" strokeWidth="1.600" fill="none">
            <rect x="1" y="1" width="18" height="18" rx="2" />
          </svg>
          <svg viewBox="0 0 20 20" className="w-[20px] h-[20px]" stroke="#fff" strokeWidth="1.600" fill="none">
            <path d="M0.500 0.500l19 19M19.500 0.500l-19 19" />
          </svg>
        </div>
      </header>
      <div className="h-[42px] shrink-0 bg-[#3c3d3f] border-b-[3px] border-[#464749] flex items-center pl-[13px] pt-[2px] gap-[29.300px] text-[23px] tracking-[-0.25px] text-white font-['Open_Sans',sans-serif]">
        <span>Archivo</span>
        <span>Máquina</span>
        <span>Ver</span>
        <span>Entrada</span>
        <span>Dispositivos</span>
        <span>Ayuda</span>
      </div>
      <div className="h-[32px] shrink-0 bg-[#141414] relative flex items-center justify-center text-[#eeeeee] text-[14px]">
        <div className="absolute left-[8px] top-[12px] w-[29px] h-[8px] rounded-full bg-white" />
        <div className="absolute left-[43px] top-[13px] w-[6px] h-[6px] rounded-full bg-[#8a8a8a]" />
        <span className="ml-[66px] -mt-[3px] tracking-[-0.2px] whitespace-pre">12 de may  22:19</span>
        <div className="absolute right-0 top-[3px] w-[95px] h-[26px] rounded-l-full bg-[#3a3a3a] flex items-center gap-[13px] pl-[13px] text-white">
          <Wired className="w-[15px] h-[15px]" />
          <MutedDark className="w-[15px] h-[15px] text-[#9a9a9a]" />
          <Battery className="w-[15px] h-[15px]" />
        </div>
      </div>
      <div className="flex-1 flex min-h-0">
        <Dock />
        <div className="relative flex-1 overflow-hidden bg-[radial-gradient(ellipse_620px_560px_at_100%_20%,rgba(38,8,28,0.9),rgba(38,8,28,0)),radial-gradient(ellipse_700px_500px_at_0%_0%,rgba(46,8,34,0.85),rgba(46,8,34,0)),linear-gradient(150deg,#46122f_0%,#551a3c_35%,#612244_65%,#68243f_85%,#852e3e_100%)]">
          <Wallpaper />
          <QuickSettings />
          <div className="absolute left-[142px] top-[312px] w-[1135px] h-[837px] rounded-[12px] overflow-hidden flex shadow-[0_12px_45px_rgba(0,0,0,0.35),0_0_0_1px_rgba(0,0,0,0.12)]">
            <Sidebar />
            <Content />
          </div>
          <div className="absolute left-[11px] top-[1415px] w-[116px] flex flex-col items-center">
            <HomeFolder />
            <span className="mt-[8px] text-[14px] tracking-[0.05px] text-white whitespace-nowrap [text-shadow:0_1px_2px_rgba(0,0,0,0.6)]">Carpeta personal</span>
          </div>
        </div>
      </div>
      <footer className="h-[40px] shrink-0 bg-[#3c3d3f] flex items-center justify-end pt-[6px] relative text-white">
        <div className="flex items-center gap-[7.500px] pr-[7px]">
          <VbHdd />
          <VbDisc />
          <VbAudio />
          <VbNet />
          <VbUsb />
          <VbFolder />
          <VbDisplay />
          <VbCapture />
          <VbTurtle />
          <VbCpu />
          <VbDown />
        </div>
        <span className="text-[23px] tracking-[-0.05px] font-['Open_Sans',sans-serif] mr-[45px] -mt-[2px]">CTRL DERECHA</span>
        <div className="absolute right-[2px] bottom-[2px] grid grid-cols-3 gap-[2px]">
          {[0, 1, 2, 3, 4, 5, 6, 7, 8].map((n) => (
            <div key={n} className={n === 0 || n === 1 || n === 3 ? "w-[3px] h-[3px]" : "w-[3px] h-[3px] bg-[#6a6a6a]"} />
          ))}
        </div>
      </footer>
    </div>
  );
}
